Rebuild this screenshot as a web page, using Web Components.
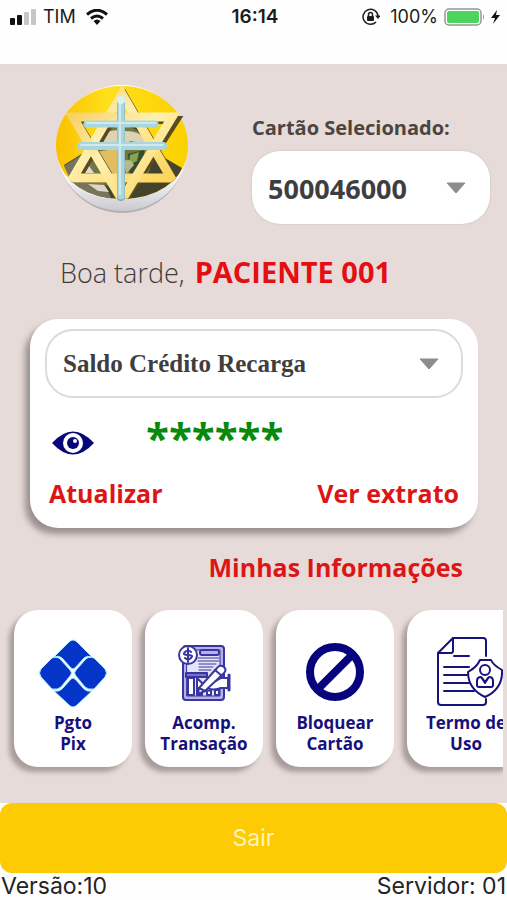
<!DOCTYPE html>
<html lang="pt-BR">
<head>
<meta charset="utf-8">
<meta name="viewport" content="width=device-width, initial-scale=1">
<title>Cartão</title>
<style>
    body {
        margin: 0;
        background: #fefefe;
        font-family: "Open Sans", sans-serif;
        color: #413b3a;
    }
</style>
</head>
<body>
<card-app>
    <status-bar slot="status" carrier="TIM" time="16:14" battery="100%"></status-bar>

    <app-logo slot="logo"></app-logo>
    <card-select slot="account" label="Cartão Selecionado:" options="500046000"></card-select>

    <user-greeting slot="greeting" text="Boa tarde,">PACIENTE 001</user-greeting>

    <balance-card slot="balance" value="******">
        <card-select slot="kind" class="outlined" hide-label label="Tipo de saldo" options="Saldo Crédito Recarga"></card-select>
        <text-link slot="actions" href="#atualizar">Atualizar</text-link>
        <text-link slot="actions" href="#extrato">Ver extrato</text-link>
    </balance-card>

    <text-link slot="info" href="#informacoes">Minhas Informações</text-link>

    <menu-tile slot="menu">
        <svg slot="icon" viewBox="0 0 70 70" aria-hidden="true">
            <g fill="#0534c9" stroke="#a9ecff" stroke-width="1">
                <path d="M16 19 L31 4 Q35 0 39 4 L54 19 Q49 17 46 20 L37 30 Q35 32 33 30 L24 20 Q21 17 16 19Z"/>
                <path d="M16 53 L31 67 Q35 71 39 67 L54 53 Q49 54 46 51 L37 41 Q35 39 33 41 L24 51 Q21 54 16 53Z"/>
                <path d="M14 20 Q20 18 23 22 L32 32 Q35 35 32 38 L23 49 Q20 52 14 51 L3 39 Q0 35 3 31Z"/>
                <path d="M56 20 Q50 18 47 22 L38 32 Q35 35 38 38 L47 49 Q50 52 56 51 L67 39 Q70 35 67 31Z"/>
            </g>
        </svg>
        Pgto<br>Pix
    </menu-tile>

    <menu-tile slot="menu">
        <svg slot="icon" viewBox="0 0 70 70" aria-hidden="true">
            <g fill="none" stroke="#3a36a0" stroke-width="2" stroke-linejoin="round" stroke-linecap="round">
                <rect x="14" y="8" width="41" height="54" rx="3" fill="#b4b2e8"/>
                <rect x="18" y="12" width="33" height="46" fill="#e4e3f7" stroke-width="1"/>
                <rect x="31" y="12" width="19" height="5" rx="2" fill="#b4b2e8"/>
                <path d="M29 20H50M29 23H50M30 26H47M30 29H44M30 32H42" stroke-width="1"/>
                <path d="M17 35H38V39H17Z" fill="#7672c8"/>
                <path d="M19 40V57H25V40ZM28 40V57H33V45ZM38 53V57H42V52ZM46 52V57H50V52Z" fill="#fff"/>
                <path d="M40 47L52 40H59V50H52Q44 53 39 50Z" fill="#fff"/>
                <path d="M60 37V52" stroke-width="3"/>
                <path d="M30 50L48 30Q51 26 55 29Q58 32 55 35L36 53L29 56Z" fill="#fff"/>
                <path d="M46 32L53 38M30 50L36 53"/>
                <circle cx="19" cy="17" r="9" fill="#fff"/>
                <path d="M22 14Q19 11 16 14T19 17T22 20Q19 23 16 20M19 10V24" stroke-width="2"/>
            </g>
        </svg>
        Acomp.<br>Transação
    </menu-tile>

    <menu-tile slot="menu">
        <svg slot="icon" viewBox="0 0 70 70" aria-hidden="true">
            <circle cx="35" cy="34" r="25" fill="none" stroke="#07057b" stroke-width="8"/>
            <path d="M18 51L52 17" stroke="#07057b" stroke-width="8"/>
        </svg>
        Bloquear<br>Cartão
    </menu-tile>

    <menu-tile slot="menu">
        <svg slot="icon" viewBox="0 0 70 70" aria-hidden="true">
            <g fill="none" stroke="#17137c" stroke-width="2" stroke-linejoin="round" stroke-linecap="round">
                <path d="M55 18V3Q55 0 52 0H22L7 15V64Q7 67 10 67H52Q55 67 55 64V61"/>
                <path d="M22 0V13Q22 15 20 15H7"/>
                <path d="M23 18H38M13 29H38M13 37H36M13 45H38M13 53H43"/>
                <path d="M49 22H60Q62 27 71 32Q72 51 54 59Q37 51 37 34Q46 29 49 22Z" fill="#fff"/>
                <circle cx="54" cy="32" r="5"/>
                <path d="M50 39Q46 39 46 43V47Q46 49 48 49H60Q62 49 62 47V43Q62 39 58 39L54 44Z"/>
                <path d="M51 40L54 45L57 40"/>
            </g>
        </svg>
        Termo de<br>Uso
    </menu-tile>

    <exit-button slot="exit">Sair</exit-button>
    <app-version slot="footer" version="10" server="01"></app-version>
</card-app>

<template id="card-app">
    <style>
        :host {
            display: flex;
            flex-direction: column;
            min-height: 100vh;
            overflow: hidden;
        }
        main {
            flex: 1;
            background: #e6dbd8;
        }
        header {
            display: flex;
            align-items: flex-start;
            gap: 62px;
            padding: 16px 17px 0 54px;
        }
        .account {
            flex: 1;
            min-width: 0;
            padding-top: 35px;
        }
        .greeting {
            padding: 30px 20px 28px 60px;
        }
        .balance {
            padding: 0 29px 0 30px;
        }
        .info {
            display: flex;
            justify-content: flex-end;
            padding: 23px 44px 17px;
        }
        .menu {
            display: flex;
            gap: 13px;
            margin-right: 4px;
            padding: 10px 0 36px 14px;
            overflow-x: auto;
            scrollbar-width: none;
        }
    </style>
    <slot name="status"></slot>
    <main>
        <header>
            <slot name="logo"></slot>
            <div class="account"><slot name="account"></slot></div>
        </header>
        <div class="greeting"><slot name="greeting"></slot></div>
        <div class="balance"><slot name="balance"></slot></div>
        <div class="info"><slot name="info"></slot></div>
        <nav class="menu"><slot name="menu"></slot></nav>
    </main>
    <slot name="exit"></slot>
    <slot name="footer"></slot>
</template>

<template id="status-bar">
    <style>
        :host {
            display: grid;
            grid-template-columns: 1fr auto 1fr;
            align-items: start;
            box-sizing: border-box;
            height: 65px;
            padding: 5px 7px 0 10px;
            border-bottom: 1px solid #dedada;
            font: 18px/24px Inter, sans-serif;
            color: #1c1c1c;
        }
        div {
            display: flex;
            align-items: center;
            gap: 6px;
        }
        .right {
            justify-content: flex-end;
        }
        #time {
            font-size: 19px;
            font-weight: 600;
        }
        #carrier {
            margin-right: 4px;
        }
        #battery {
            margin-left: 4px;
        }
    </style>
    <div>
        <svg width="27" height="16" aria-hidden="true">
            <rect x="0" y="9" width="5" height="7" rx="1" fill="#111"/>
            <rect x="7" y="6" width="5" height="10" rx="1" fill="#111"/>
            <rect x="14" y="3" width="5" height="13" rx="1" fill="#c6c6c6"/>
            <rect x="21" y="0" width="5" height="16" rx="1" fill="#c6c6c6"/>
        </svg>
        <span id="carrier"></span>
        <svg width="22" height="16" viewBox="0 0 22 16" fill="none" stroke="#111" stroke-width="3" aria-hidden="true">
            <path d="M1 5.500Q11 -3 21 5.500"/>
            <path d="M5 9.500Q11 4.500 17 9.500"/>
            <path d="M7.500 12Q11 9 14.500 12L11 16Z" fill="#111" stroke="none"/>
        </svg>
    </div>
    <span id="time"></span>
    <div class="right">
        <svg width="18" height="18" viewBox="0 0 18 18" fill="none" stroke="#1c1c1c" aria-hidden="true">
            <path d="M14 14A7.500 7.500 0 1 1 16 8" stroke-width="1.500"/>
            <path d="M13 7.500H18.500L16 11Z" fill="#1c1c1c" stroke="none"/>
            <rect x="5" y="8" width="7" height="5" rx="1" fill="#1c1c1c" stroke="none"/>
            <path d="M6.500 8V6.500A2 2 0 0 1 10.500 6.500V8" stroke-width="1.500"/>
        </svg>
        <span id="battery"></span>
        <svg width="41" height="18" viewBox="0 0 41 18" aria-hidden="true">
            <rect x="1" y="1" width="36" height="16" rx="4" fill="#fff" stroke="#8f9a8f" stroke-width="1.500"/>
            <rect x="3" y="3" width="32" height="12" rx="2" fill="#4cd45c"/>
            <path d="M39 6Q41 9 39 12Z" fill="#8f9a8f"/>
        </svg>
        <svg width="9" height="14" viewBox="0 0 9 14" aria-hidden="true">
            <path d="M6 0L0 8H4L2 14L9 5H5Z" fill="#111"/>
        </svg>
    </div>
</template>

<template id="app-logo">
    <style>
        :host {
            display: block;
            flex: none;
        }
        svg {
            display: block;
        }
    </style>
    <svg width="136" height="140" viewBox="14 11 136 140" role="img" aria-label="Logo">
        <defs>
            <linearGradient id="disc" x1="0" x2="1">
                <stop offset="0" stop-color="#fbc000"/>
                <stop offset=".4" stop-color="#ffe01c"/>
                <stop offset="1" stop-color="#fbd000"/>
            </linearGradient>
            <linearGradient id="gold" x1="0" y1="0" x2="1" y2="1">
                <stop offset="0" stop-color="#f8d268"/>
                <stop offset=".4" stop-color="#fff0b0"/>
                <stop offset="1" stop-color="#fcd458"/>
            </linearGradient>
            <linearGradient id="rim" x1="0" y1="0" x2="0" y2="1">
                <stop offset=".7" stop-color="#fff"/>
                <stop offset="1" stop-color="#c9c9cf"/>
            </linearGradient>
            <clipPath id="face"><path d="M14 11H150V84Q134 128 82 129Q30 128 14 84Z"/></clipPath>
        </defs>
        <ellipse cx="82" cy="80" rx="64" ry="63" fill="#b5b0b2"/>
        <ellipse cx="82" cy="78" rx="65" ry="63" fill="url(#rim)"/>
        <g clip-path="url(#face)">
            <ellipse cx="82" cy="75" rx="66" ry="59" fill="url(#disc)"/>
            <path d="M24 95L48 80L60 60L82 40L106 60L118 84L142 98L126 130H40Z" fill="#44432b"/>
            <path d="M24 96L46 82L60 104L72 130H40Z" fill="#77735c"/>
            <ellipse cx="82" cy="88" rx="30" ry="32" fill="#71783f"/>
            <path d="M56 76Q64 57 82 61Q103 60 108 74L90 71L80 82Z" fill="#ddd3b4"/>
            <path d="M56 82L79 78V106L67 104Z" fill="#e0bd61"/>
            <path d="M88 84L104 80L105 99L90 108Z" fill="#344d31"/>
            <path d="M90 85L99 82L97 91L89 95Z" fill="#87a548"/>
            <path d="M84 91Q91 88 94 95L86 104Z" fill="#b5b88a"/>
            <path d="M48 114L64 115L69 122L58 121Z" fill="#ddd7c7"/>
            <path d="M39 103L47 93L54 103Z" fill="#e1dcc6"/>
            <g fill="none" stroke="#5a4a24" stroke-width="8">
                <path d="M85 27L133 109H37Z"/>
                <path d="M36 50H136L84 131Z"/>
            </g>
            <g fill="none" stroke="url(#gold)" stroke-width="9">
                <path d="M82 24L131 108H33Z"/>
                <path d="M33 47H132L82 130Z"/>
            </g>
        </g>
        <path d="M81 32V127" stroke="#7faaae" stroke-width="8" stroke-linecap="round"/>
        <g stroke="#a9d6dc" stroke-linecap="round">
            <path d="M81 30V126" stroke-width="7"/>
            <path d="M47 54H115" stroke-width="7"/>
            <path d="M41 76H123" stroke-width="8"/>
        </g>
        <g stroke="#cfe9ec" stroke-width="2" stroke-linecap="round">
            <path d="M47 53H115M41 75H123M80 32V124"/>
        </g>
        <circle cx="81" cy="30" r="4" fill="#d8f2f5"/>
    </svg>
</template>

<template id="card-select">
    <style>
        :host {
            display: block;
            --radius: 28px;
        }
        label {
            display: block;
            margin-bottom: 11px;
            font-size: 20px;
            line-height: 24px;
            font-weight: 700;
            color: #4d4442;
        }
        .box {
            display: grid;
            align-items: center;
        }
        select, svg {
            grid-area: 1 / 1;
        }
        select {
            appearance: none;
            box-sizing: border-box;
            width: 100%;
            height: 73px;
            padding: 2px 60px 0 16px;
            border: 0;
            border-radius: var(--radius);
            box-shadow: 0 0 2px #bdb5b3;
            background: #fff;
            color: #3e3e40;
            font: 700 27px "Open Sans", sans-serif;
        }
        svg {
            justify-self: end;
            margin-right: 24px;
            pointer-events: none;
        }
        :host(.outlined) select {
            height: 69px;
            padding: 0 60px 0 16px;
            border: 2px solid #dbdbdb;
            box-shadow: none;
            font: 700 25px "Liberation Serif", serif;
        }
        :host([hide-label]) label {
            display: none;
        }
    </style>
    <label for="select"></label>
    <div class="box">
        <select id="select"></select>
        <svg width="20" height="12" viewBox="0 0 20 12" aria-hidden="true"><path d="M1 1H19L10 11Z" fill="#8c8c8c" stroke="#8c8c8c" stroke-linejoin="round"/></svg>
    </div>
</template>

<template id="user-greeting">
    <style>
        :host {
            display: flex;
            align-items: baseline;
            gap: 10px;
            line-height: 36px;
        }
        span {
            font-size: 27px;
            font-weight: 300;
        }
        strong {
            font-size: 29px;
            font-weight: 700;
            color: #e50f13;
        }
    </style>
    <span id="text"></span>
    <strong><slot></slot></strong>
</template>

<template id="balance-card">
    <style>
        :host {
            display: block;
            padding: 10px 15px 19px;
            border-radius: 28px;
            background: #fff;
            box-shadow: -5px 6px 6px #9b9090;
        }
        .value {
            display: flex;
            align-items: flex-start;
            gap: 52px;
            margin: 23px 7px 12px;
        }
        button {
            display: flex;
            align-items: center;
            height: 44px;
            padding: 0;
            border: 0;
            background: none;
        }
        output {
            font-size: 42px;
            line-height: 32px;
            font-weight: 700;
            color: #078a0b;
        }
        .actions {
            display: flex;
            justify-content: space-between;
            padding: 0 4px;
        }
    </style>
    <slot name="kind"></slot>
    <div class="value">
        <button type="button" aria-label="Mostrar saldo">
            <svg width="42" height="24" viewBox="0 0 42 24" aria-hidden="true">
                <path d="M0 12Q21 -11 42 12Q21 35 0 12Z" fill="#07077a"/>
                <circle cx="21" cy="12" r="10" fill="#fff"/>
                <circle cx="21" cy="12" r="6" fill="#07077a"/>
                <circle cx="23" cy="10" r="2" fill="#fff"/>
            </svg>
        </button>
        <output id="value"></output>
    </div>
    <div class="actions"><slot name="actions"></slot></div>
</template>

<template id="text-link">
    <style>
        :host {
            display: block;
        }
        a {
            font-size: 25px;
            line-height: 32px;
            font-weight: 700;
            color: #dc1517;
            text-decoration: none;
            display: block;
        }
    </style>
    <a><slot></slot></a>
</template>

<template id="menu-tile">
    <style>
        :host {
            display: block;
            flex: 0 0 118px;
        }
        button {
            display: flex;
            flex-direction: column;
            align-items: center;
            gap: 4px;
            box-sizing: border-box;
            width: 100%;
            padding: 28px 0 13px;
            border: 0;
            border-radius: 24px;
            background: #fff;
            box-shadow: -5px 5px 5px #a89d9c;
            font: 700 17px/21px "Open Sans", sans-serif;
            color: #17107a;
            white-space: nowrap;
        }
        ::slotted(svg) {
            display: block;
            width: 70px;
            height: 70px;
            overflow: visible;
        }
    </style>
    <button type="button">
        <slot name="icon"></slot>
        <span><slot></slot></span>
    </button>
</template>

<template id="exit-button">
    <style>
        :host {
            display: block;
        }
        button {
            display: block;
            width: 100%;
            height: 70px;
            border: 0;
            border-radius: 12px;
            background: #fccb03;
            color: #fff3bd;
            font: 23px Inter, sans-serif;
        }
    </style>
    <button type="button"><slot></slot></button>
</template>

<template id="app-version">
    <style>
        :host {
            display: flex;
            justify-content: space-between;
            padding: 0 1px;
            font: 23px/27px Inter, sans-serif;
            color: #242424;
        }
    </style>
    <span id="version"></span>
    <span id="server"></span>
</template>

<script>
    class BaseElement extends HTMLElement {

        connectedCallback() {
            if (this.shadowRoot) return;
            const template = document.getElementById(this.localName);
            this.attachShadow({ mode: 'open' });
            this.shadowRoot.appendChild(template.content.cloneNode(true));
            this.render();
        }

        render() {}

        setText(id, text) {
            this.shadowRoot.getElementById(id).textContent = text;
        }

    }

    class CardApp extends BaseElement {}
    class AppLogo extends BaseElement {}
    class MenuTile extends BaseElement {}
    class ExitButton extends BaseElement {}

    class StatusBar extends BaseElement {
        render() {
            this.setText('carrier', this.getAttribute('carrier'));
            this.setText('time', this.getAttribute('time'));
            this.setText('battery', this.getAttribute('battery'));
        }
    }

    class CardSelect extends BaseElement {
        render() {
            const select = this.shadowRoot.querySelector('select');
            const label = this.getAttribute('label');
            this.shadowRoot.querySelector('label').textContent = label;
            select.setAttribute('aria-label', label);
            // options are separated by "|"
            this.getAttribute('options').split('|').forEach(text => select.add(new Option(text)));
        }
    }

    class UserGreeting extends BaseElement {
        render() {
            this.setText('text', this.getAttribute('text'));
        }
    }

    class BalanceCard extends BaseElement {
        render() {
            this.setText('value', this.getAttribute('value'));
        }
    }

    class TextLink extends BaseElement {
        render() {
            this.shadowRoot.querySelector('a').href = this.getAttribute('href');
        }
    }

    class AppVersion extends BaseElement {
        render() {
            this.setText('version', 'Versão:' + this.getAttribute('version'));
            this.setText('server', 'Servidor: ' + this.getAttribute('server'));
        }
    }

    customElements.define('card-app', CardApp);
    customElements.define('status-bar', StatusBar);
    customElements.define('app-logo', AppLogo);
    customElements.define('card-select', CardSelect);
    customElements.define('user-greeting', UserGreeting);
    customElements.define('balance-card', BalanceCard);
    customElements.define('text-link', TextLink);
    customElements.define('menu-tile', MenuTile);
    customElements.define('exit-button', ExitButton);
    customElements.define('app-version', AppVersion);
</script>
</body>
</html>
